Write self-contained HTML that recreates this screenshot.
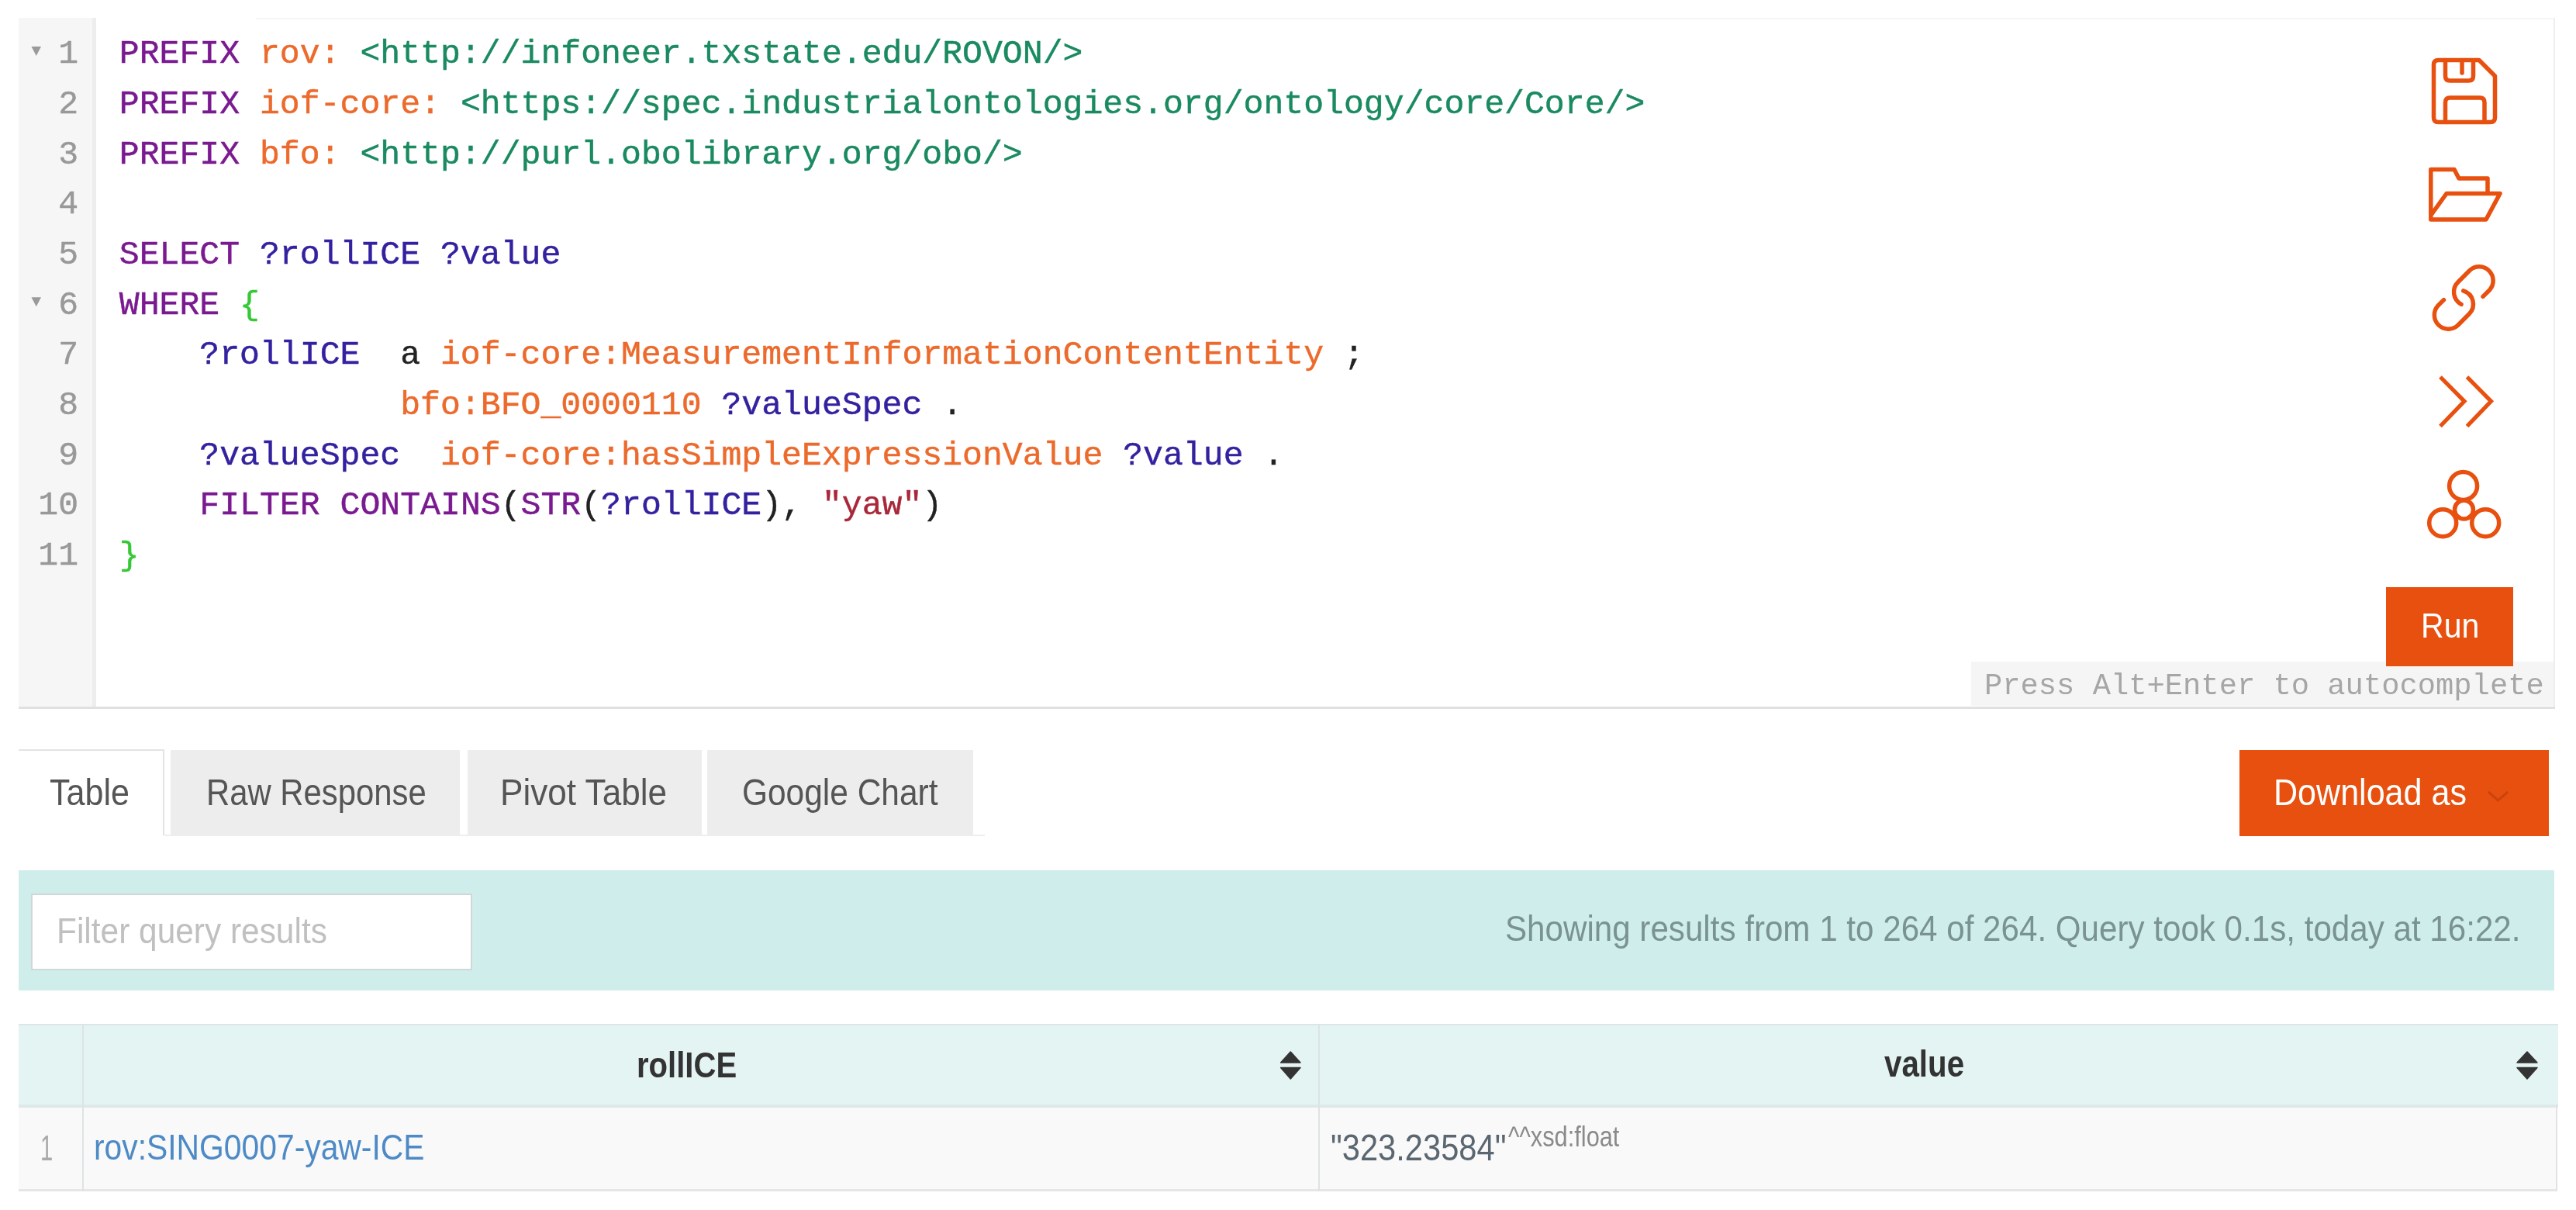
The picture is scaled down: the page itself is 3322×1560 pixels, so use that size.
<!DOCTYPE html>
<html><head><meta charset="utf-8"><title>YASGUI</title>
<style>
html,body{margin:0;padding:0;background:#ffffff;width:3322px;height:1560px;overflow:hidden;}
body{position:relative;filter:blur(0.7px);}
.r{position:absolute;}
.t{position:absolute;line-height:0;white-space:pre;transform-origin:0 0;font-family:"Liberation Sans",sans-serif;}
.m{position:absolute;line-height:0;white-space:pre;font-family:"Liberation Mono",monospace;}
.ov{position:absolute;left:0;top:0;}
</style></head><body>
<div class="r" style="left:24.00px;top:23.00px;width:95.00px;height:888.00px;background:#f6f6f6;"></div><div class="r" style="left:119.00px;top:23.00px;width:5.00px;height:888.00px;background:#ededed;"></div><div class="r" style="left:330.00px;top:23.00px;width:2965.00px;height:1.50px;background:#f6f6f6;"></div><div class="r" style="left:3293.00px;top:23.00px;width:2.00px;height:888.00px;background:#eeeeee;"></div><div class="r" style="left:24.00px;top:911.00px;width:3271.00px;height:2.50px;background:#e0e0e0;"></div><div class="m" style="left:153.76px;top:70.42px;font-size:43.15px"><span style="color:#7a1a90;-webkit-text-stroke:0.45px #7a1a90">PREFIX</span><span style="color:#222222;-webkit-text-stroke:0.45px #222222"> </span><span style="color:#ec6a2c;-webkit-text-stroke:0.45px #ec6a2c">rov:</span><span style="color:#222222;-webkit-text-stroke:0.45px #222222"> </span><span style="color:#1a8a60;-webkit-text-stroke:0.45px #1a8a60">&lt;http://infoneer.txstate.edu/ROVON/&gt;</span></div><div class="m" style="left:75.16px;top:70.42px;font-size:43.15px"><span style="color:#999999;-webkit-text-stroke:0.45px #999999">1</span></div><div class="m" style="left:153.76px;top:135.09px;font-size:43.15px"><span style="color:#7a1a90;-webkit-text-stroke:0.45px #7a1a90">PREFIX</span><span style="color:#222222;-webkit-text-stroke:0.45px #222222"> </span><span style="color:#ec6a2c;-webkit-text-stroke:0.45px #ec6a2c">iof-core:</span><span style="color:#222222;-webkit-text-stroke:0.45px #222222"> </span><span style="color:#1a8a60;-webkit-text-stroke:0.45px #1a8a60">&lt;https://spec.industrialontologies.org/ontology/core/Core/&gt;</span></div><div class="m" style="left:75.16px;top:135.09px;font-size:43.15px"><span style="color:#999999;-webkit-text-stroke:0.45px #999999">2</span></div><div class="m" style="left:153.76px;top:199.76px;font-size:43.15px"><span style="color:#7a1a90;-webkit-text-stroke:0.45px #7a1a90">PREFIX</span><span style="color:#222222;-webkit-text-stroke:0.45px #222222"> </span><span style="color:#ec6a2c;-webkit-text-stroke:0.45px #ec6a2c">bfo:</span><span style="color:#222222;-webkit-text-stroke:0.45px #222222"> </span><span style="color:#1a8a60;-webkit-text-stroke:0.45px #1a8a60">&lt;http://purl.obolibrary.org/obo/&gt;</span></div><div class="m" style="left:75.16px;top:199.76px;font-size:43.15px"><span style="color:#999999;-webkit-text-stroke:0.45px #999999">3</span></div><div class="m" style="left:75.16px;top:264.43px;font-size:43.15px"><span style="color:#999999;-webkit-text-stroke:0.45px #999999">4</span></div><div class="m" style="left:153.76px;top:329.10px;font-size:43.15px"><span style="color:#7a1a90;-webkit-text-stroke:0.45px #7a1a90">SELECT</span><span style="color:#222222;-webkit-text-stroke:0.45px #222222"> </span><span style="color:#3322a0;-webkit-text-stroke:0.45px #3322a0">?rollICE</span><span style="color:#222222;-webkit-text-stroke:0.45px #222222"> </span><span style="color:#3322a0;-webkit-text-stroke:0.45px #3322a0">?value</span></div><div class="m" style="left:75.16px;top:329.10px;font-size:43.15px"><span style="color:#999999;-webkit-text-stroke:0.45px #999999">5</span></div><div class="m" style="left:153.76px;top:393.77px;font-size:43.15px"><span style="color:#7a1a90;-webkit-text-stroke:0.45px #7a1a90">WHERE</span><span style="color:#222222;-webkit-text-stroke:0.45px #222222"> </span><span style="color:#36c836;-webkit-text-stroke:0.45px #36c836">{</span></div><div class="m" style="left:75.16px;top:393.77px;font-size:43.15px"><span style="color:#999999;-webkit-text-stroke:0.45px #999999">6</span></div><div class="m" style="left:153.76px;top:458.44px;font-size:43.15px"><span style="color:#222222;-webkit-text-stroke:0.45px #222222">    </span><span style="color:#3322a0;-webkit-text-stroke:0.45px #3322a0">?rollICE</span><span style="color:#222222;-webkit-text-stroke:0.45px #222222">  </span><span style="color:#222222;-webkit-text-stroke:0.45px #222222">a</span><span style="color:#222222;-webkit-text-stroke:0.45px #222222"> </span><span style="color:#ec6a2c;-webkit-text-stroke:0.45px #ec6a2c">iof-core:MeasurementInformationContentEntity</span><span style="color:#222222;-webkit-text-stroke:0.45px #222222"> </span><span style="color:#222222;-webkit-text-stroke:0.45px #222222">;</span></div><div class="m" style="left:75.16px;top:458.44px;font-size:43.15px"><span style="color:#999999;-webkit-text-stroke:0.45px #999999">7</span></div><div class="m" style="left:153.76px;top:523.11px;font-size:43.15px"><span style="color:#222222;-webkit-text-stroke:0.45px #222222">              </span><span style="color:#ec6a2c;-webkit-text-stroke:0.45px #ec6a2c">bfo:BFO_0000110</span><span style="color:#222222;-webkit-text-stroke:0.45px #222222"> </span><span style="color:#3322a0;-webkit-text-stroke:0.45px #3322a0">?valueSpec</span><span style="color:#222222;-webkit-text-stroke:0.45px #222222"> </span><span style="color:#222222;-webkit-text-stroke:0.45px #222222">.</span></div><div class="m" style="left:75.16px;top:523.11px;font-size:43.15px"><span style="color:#999999;-webkit-text-stroke:0.45px #999999">8</span></div><div class="m" style="left:153.76px;top:587.78px;font-size:43.15px"><span style="color:#222222;-webkit-text-stroke:0.45px #222222">    </span><span style="color:#3322a0;-webkit-text-stroke:0.45px #3322a0">?valueSpec</span><span style="color:#222222;-webkit-text-stroke:0.45px #222222">  </span><span style="color:#ec6a2c;-webkit-text-stroke:0.45px #ec6a2c">iof-core:hasSimpleExpressionValue</span><span style="color:#222222;-webkit-text-stroke:0.45px #222222"> </span><span style="color:#3322a0;-webkit-text-stroke:0.45px #3322a0">?value</span><span style="color:#222222;-webkit-text-stroke:0.45px #222222"> </span><span style="color:#222222;-webkit-text-stroke:0.45px #222222">.</span></div><div class="m" style="left:75.16px;top:587.78px;font-size:43.15px"><span style="color:#999999;-webkit-text-stroke:0.45px #999999">9</span></div><div class="m" style="left:153.76px;top:652.45px;font-size:43.15px"><span style="color:#222222;-webkit-text-stroke:0.45px #222222">    </span><span style="color:#7a1a90;-webkit-text-stroke:0.45px #7a1a90">FILTER</span><span style="color:#222222;-webkit-text-stroke:0.45px #222222"> </span><span style="color:#7a1a90;-webkit-text-stroke:0.45px #7a1a90">CONTAINS</span><span style="color:#222222;-webkit-text-stroke:0.45px #222222">(</span><span style="color:#7a1a90;-webkit-text-stroke:0.45px #7a1a90">STR</span><span style="color:#222222;-webkit-text-stroke:0.45px #222222">(</span><span style="color:#3322a0;-webkit-text-stroke:0.45px #3322a0">?rollICE</span><span style="color:#222222;-webkit-text-stroke:0.45px #222222">)</span><span style="color:#222222;-webkit-text-stroke:0.45px #222222">,</span><span style="color:#222222;-webkit-text-stroke:0.45px #222222"> </span><span style="color:#a8283a;-webkit-text-stroke:0.45px #a8283a">&quot;yaw&quot;</span><span style="color:#222222;-webkit-text-stroke:0.45px #222222">)</span></div><div class="m" style="left:49.26px;top:652.45px;font-size:43.15px"><span style="color:#999999;-webkit-text-stroke:0.45px #999999">10</span></div><div class="m" style="left:153.76px;top:717.12px;font-size:43.15px"><span style="color:#36c836;-webkit-text-stroke:0.45px #36c836">}</span></div><div class="m" style="left:49.26px;top:717.12px;font-size:43.15px"><span style="color:#999999;-webkit-text-stroke:0.45px #999999">11</span></div><div class="r" style="left:2542.00px;top:852.50px;width:751.00px;height:57.50px;background:#f5f5f5;"></div><div class="m" style="left:2558.99px;top:884.97px;font-size:38.8px"><span style="color:#a6a6a6;-webkit-text-stroke:0px #a6a6a6">Press Alt+Enter to autocomplete</span></div><div class="r" style="left:3077.00px;top:757.00px;width:164.00px;height:102.00px;background:#e8500f;"></div><div class="t" style="left:3121.61px;top:807.37px;font-size:45.091px;color:#ffffff;transform:scale(0.9108,1.0000)">Run</div><div class="r" style="left:24.00px;top:966.00px;width:188.00px;height:2.00px;background:#e4e4e4;"></div><div class="r" style="left:210.00px;top:966.00px;width:2.00px;height:111.00px;background:#e4e4e4;"></div><div class="r" style="left:212.00px;top:1076.00px;width:1058.00px;height:2.00px;background:#eeeeee;"></div><div class="t" style="left:63.83px;top:1021.96px;font-size:48.000px;color:#555555;transform:scale(0.8978,1.0000)">Table</div><div class="r" style="left:220.00px;top:967.00px;width:373.00px;height:109.00px;background:#ededed;"></div><div class="t" style="left:265.55px;top:1021.96px;font-size:48.000px;color:#555555;transform:scale(0.8718,1.0000)">Raw Response</div><div class="r" style="left:603.00px;top:967.00px;width:302.00px;height:109.00px;background:#ededed;"></div><div class="t" style="left:645.36px;top:1021.96px;font-size:48.000px;color:#555555;transform:scale(0.9193,1.0000)">Pivot Table</div><div class="r" style="left:911.50px;top:967.00px;width:343.50px;height:109.00px;background:#ededed;"></div><div class="t" style="left:956.88px;top:1021.96px;font-size:48.000px;color:#555555;transform:scale(0.8843,1.0000)">Google Chart</div><div class="r" style="left:2887.60px;top:966.60px;width:399.40px;height:111.40px;background:#e8500f;"></div><div class="t" style="left:2932.45px;top:1022.01px;font-size:47.273px;color:#ffffff;transform:scale(0.9111,1.0000)">Download as</div><div class="r" style="left:24.00px;top:1122.00px;width:3270.00px;height:155.00px;background:#cfeeeb;"></div><div class="r" style="left:40.00px;top:1152.00px;width:569.00px;height:99.00px;background:#ffffff;box-shadow:inset 0 0 0 2px #cfd8d7;"></div><div class="t" style="left:72.50px;top:1200.46px;font-size:46.545px;color:#c0c0c0;transform:scale(0.9116,1.0000)">Filter query results</div><div class="t" style="left:1940.60px;top:1198.32px;font-size:45.818px;color:#7a9291;transform:scale(0.9202,1.0000)">Showing results from 1 to 264 of 264. Query took 0.1s, today at 16:22.</div><div class="r" style="left:24.00px;top:1320.00px;width:3275.00px;height:2.00px;background:#dde6e6;"></div><div class="r" style="left:24.00px;top:1322.00px;width:3275.00px;height:102.00px;background:#e4f4f3;"></div><div class="r" style="left:24.00px;top:1424.00px;width:3275.00px;height:4.00px;background:#dde9e8;"></div><div class="r" style="left:24.00px;top:1428.00px;width:3273.00px;height:105.00px;background:#f9f9f9;"></div><div class="r" style="left:24.00px;top:1533.00px;width:3273.00px;height:3.00px;background:#e6e6e6;"></div><div class="r" style="left:106.00px;top:1320.00px;width:2.00px;height:216.00px;background:#dde3e3;"></div><div class="r" style="left:1700.00px;top:1320.00px;width:2.00px;height:216.00px;background:#dde3e3;"></div><div class="r" style="left:3296.00px;top:1424.00px;width:2.00px;height:112.00px;background:#e2e2e2;"></div><div class="t" style="left:51.82px;top:1479.86px;font-size:46.545px;color:#aaaaaa;transform:scale(0.6259,1.0000)">1</div><div class="t" style="left:821.39px;top:1372.86px;font-size:46.545px;color:#333333;font-weight:bold;transform:scale(0.8614,1.0000)">rollICE</div><div class="t" style="left:2430.30px;top:1372.11px;font-size:47.273px;color:#333333;font-weight:bold;transform:scale(0.8529,1.0000)">value</div><div class="t" style="left:120.85px;top:1479.46px;font-size:46.545px;color:#4d8ac6;transform:scale(0.8772,1.0000)">rov:SING0007-yaw-ICE</div><div class="t" style="left:1716.23px;top:1479.61px;font-size:47.273px;color:#5a6670;transform:scale(0.8813,1.0000)">&quot;323.23584&quot;</div><div class="t" style="left:1944.85px;top:1466.39px;font-size:36.364px;color:#8a8a8a;transform:scale(0.8457,1.0000)">^^xsd:float</div>
<svg class="ov" width="3322" height="1560" viewBox="0 0 3322 1560"><path d="M40.5,60.00 L53,60.00 L46.75,72.00 Z" fill="#9a9a9a"/><path d="M40.5,383.35 L53,383.35 L46.75,395.35 Z" fill="#9a9a9a"/><path fill="none" stroke="#e8500f" stroke-width="5.5" stroke-linejoin="round" stroke-linecap="round" d="M3144.5,77.5 H3197 L3217.5,98 V151.5 Q3217.5,157.5 3211.5,157.5 H3144.5 Q3138.5,157.5 3138.5,151.5 V83.5 Q3138.5,77.5 3144.5,77.5 Z"/><path fill="none" stroke="#e8500f" stroke-width="5.5" stroke-linejoin="round" stroke-linecap="round" d="M3153.5,78 V98 Q3153.5,104 3159.5,104 H3183.5 Q3189.5,104 3189.5,98 V78"/><path fill="none" stroke="#e8500f" stroke-width="5.5" stroke-linejoin="round" stroke-linecap="round" d="M3175,81 V94"/><path fill="none" stroke="#e8500f" stroke-width="5.5" stroke-linejoin="round" stroke-linecap="round" d="M3153.5,157 V132 Q3153.5,126 3159.5,126 H3198 Q3204,126 3204,132 V157"/><path fill="none" stroke="#e8500f" stroke-width="5.5" stroke-linejoin="round" stroke-linecap="round" d="M3208,249 V230 H3171 L3165,218.5 H3134.8 V283 H3206 L3224,249.5 H3155 L3136,276"/><path fill="none" stroke="#e8500f" stroke-width="5.5" stroke-linejoin="round" stroke-linecap="round" d="M3202,382.4 L3210.7,373.7 A18,18 0 0 0 3185.3,348.3 L3169.8,363.8 A18,18 0 0 0 3174.05,392.4"/><path fill="none" stroke="#e8500f" stroke-width="5.5" stroke-linejoin="round" stroke-linecap="round" d="M3176.76,374.79 A18,18 0 0 1 3184.2,404.7 L3169.2,419.7 A18,18 0 0 1 3143.8,394.3 L3151.5,386.6"/><path fill="none" stroke="#e8500f" stroke-width="5.2" stroke-linejoin="miter" d="M3147,486 L3178,517.3 L3147,549.5 M3181.5,486 L3212.5,517.3 L3181.5,549.5"/><circle cx="3176.6" cy="626.5" r="18" fill="none" stroke="#e8500f" stroke-width="5.5"/><circle cx="3150.2" cy="674.3" r="17.5" fill="none" stroke="#e8500f" stroke-width="5.5"/><circle cx="3205.2" cy="674.3" r="17.5" fill="none" stroke="#e8500f" stroke-width="5.5"/><circle cx="3177.5" cy="657" r="12" fill="none" stroke="#e8500f" stroke-width="5.5"/><path d="M3209,1021 L3221.5,1032 L3234,1021" fill="none" stroke="#c9440f" stroke-width="3"/><path d="M1651.6,1370 L1664.3,1356 L1677,1370 Z M1651.6,1376.5 L1664.3,1391 L1677,1376.5 Z" fill="#333333" stroke="#333333" stroke-width="1.5" stroke-linejoin="round"/><path d="M3246,1370 L3259.0,1356 L3272,1370 Z M3246,1376.5 L3259.0,1391 L3272,1376.5 Z" fill="#333333" stroke="#333333" stroke-width="1.5" stroke-linejoin="round"/></svg>
</body></html>
